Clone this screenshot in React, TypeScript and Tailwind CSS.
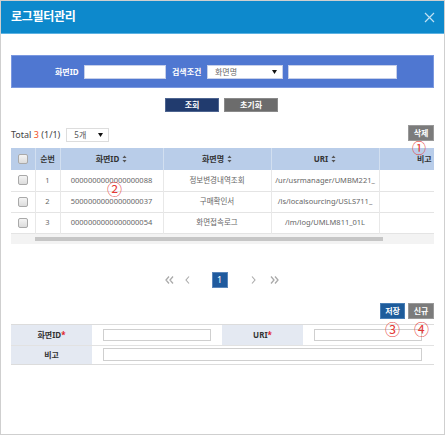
import React from "react";

const font = { fontFamily: "'Noto Sans', 'Noto Sans CJK KR', sans-serif" };

function SortIcon() {
  return (
    <svg width="5" height="8" viewBox="0 0 5 8" className="inline-block ml-[3px] -mt-[1px]">
      <path d="M2.5 0.5 L4.5 3 L0.5 3 Z" fill="#555" />
      <path d="M2.5 7.5 L4.5 5 L0.5 5 Z" fill="#555" />
    </svg>
  );
}

function Check() {
  return (
    <span className="inline-block w-[10px] h-[10px] rounded-[2px] border border-[#a9a9a9] bg-gradient-to-b from-[#f4f4f4] to-[#dcdcdc]" />
  );
}

function Caret() {
  return (
    <svg width="5" height="4" viewBox="0 0 5 4">
      <path d="M0 0 L5 0 L2.5 4 Z" fill="#111" />
    </svg>
  );
}

const rows = [
  { no: 1, id: "0000000000000000088", name: "정보변경내역조회", uri: "/ur/usrmanager/UMBM221_" },
  { no: 2, id: "5000000000000000037", name: "구매확인서", uri: "/ls/localsourcing/USLS711_" },
  { no: 3, id: "0000000000000000054", name: "화면접속로그", uri: "/lm/log/UMLM811_01L" },
];

export default function App() {
  return (
    <div style={font} className="relative w-[445px] h-[435px] border border-[#cfcfcf] bg-white overflow-hidden">
      {/* header */}
      <div className="h-[33px] bg-[#0d89cc] border-b border-[#5cb2e2] flex items-center justify-between pl-[10px] pr-[9px]">
        <span className="text-white text-[12px] font-bold tracking-tight">로그필터관리</span>
        <svg width="11" height="11" viewBox="0 0 11 11">
          <path d="M1 1 L10 10 M10 1 L1 10" stroke="#bfe0f3" strokeWidth="1.2" />
        </svg>
      </div>

      <div className="px-[10px] pt-[21px]">
        {/* search panel */}
        <div className="h-[33px] bg-[#4f77d1] border border-[#7a98e0] flex items-center pl-[43px] text-[8px] whitespace-nowrap">
          <span className="text-white font-bold w-[21px]">화면ID</span>
          <span className="ml-[8px] w-[82px] h-[14px] bg-white border border-[#c6cfe9]" />
          <span className="ml-[6px] w-[28px] text-white font-bold">검색조건</span>
          <span className="ml-[7px] w-[76px] h-[14px] bg-white border border-[#c6cfe9] flex items-center justify-between pl-[7px] pr-[5px] text-[#666]">
            화면명
            <Caret />
          </span>
          <span className="ml-[5px] w-[109px] h-[14px] bg-white border border-[#c6cfe9]" />
        </div>

        {/* buttons */}
        <div className="flex justify-center gap-[5px] mt-[10px] pr-[2px]">
          <span className="w-[54px] h-[14px] bg-[#213b6e] border border-[#4d6490] text-white text-[8px] font-bold flex items-center justify-center">조회</span>
          <span className="w-[54px] h-[14px] bg-[#6c6c6c] border border-[#8a8a8a] text-white text-[8px] font-bold flex items-center justify-center">초기화</span>
        </div>

        {/* total row */}
        <div className="flex items-end justify-between mt-[13px] h-[17px]">
          <div className="flex items-center text-[9px] text-[#444]">
            <span>
              Total <span className="text-[#f0501e]">3</span> (1/1)
            </span>
            <span className="ml-[6px] w-[43px] h-[14px] border border-[#ddd] bg-white flex items-center justify-between pl-[7px] pr-[5px] text-[8px] text-[#555]">
              5개
              <Caret />
            </span>
          </div>
          <span className="self-start w-[26px] h-[16px] bg-[#7b7b7b] border border-[#999] text-white text-[8px] font-bold flex items-center justify-center">삭제</span>
        </div>

        {/* table */}
        <div className="mt-[6px] w-[423px] overflow-hidden">
          <table className="table-fixed border-collapse w-[458px] text-[7.5px]">
            <colgroup>
              <col className="w-[24px]" />
              <col className="w-[25px]" />
              <col className="w-[103px]" />
              <col className="w-[108px]" />
              <col className="w-[108px]" />
              <col className="w-[90px]" />
            </colgroup>
            <thead>
              <tr className="h-[22px] bg-[#b9cde9] text-[#333] text-[8px]">
                <th className="border-r border-[#d2dff0]"><div className="flex justify-center"><Check /></div></th>
                <th className="border-r border-[#d2dff0] font-bold">순번</th>
                <th className="border-r border-[#d2dff0] font-bold">화면ID<SortIcon /></th>
                <th className="border-r border-[#d2dff0] font-bold">화면명<SortIcon /></th>
                <th className="border-r border-[#d2dff0] font-bold">URI<SortIcon /></th>
                <th className="font-bold">비고</th>
              </tr>
            </thead>
            <tbody>
              {rows.map((r) => (
                <tr key={r.no} className="h-[21px] border-b border-[#e4e4e4] text-[#666]">
                  <td className="border-r border-[#e8e8e8]"><div className="flex justify-center"><Check /></div></td>
                  <td className="border-r border-[#e8e8e8] text-center">{r.no}</td>
                  <td className="border-r border-[#e8e8e8] text-center">{r.id}</td>
                  <td className="border-r border-[#e8e8e8] text-center">{r.name}</td>
                  <td className="border-r border-[#e8e8e8] text-center">{r.uri}</td>
                  <td></td>
                </tr>
              ))}
            </tbody>
          </table>
          {/* horizontal scroll bar */}
          <div className="h-[10px] bg-[#f3f3f3] flex items-center">
            <span className="ml-[24px] w-[348px] h-[4px] bg-[#c6c6c6]" />
          </div>
        </div>

        {/* pagination */}
        <div className="flex items-center justify-center mt-[28px] h-[16px] pr-[2px]">
          <svg width="9" height="8" viewBox="0 0 9 8" className="mr-[11px]">
            <path d="M4 0.5 L1 4 L4 7.5 M8 0.5 L5 4 L8 7.5" stroke="#aaa" strokeWidth="1.3" fill="none" />
          </svg>
          <svg width="5" height="8" viewBox="0 0 5 8" className="mr-[22px]">
            <path d="M4 0.5 L1 4 L4 7.5" stroke="#aaa" strokeWidth="1.1" fill="none" />
          </svg>
          <span className="w-[16px] h-[16px] bg-[#1f5a9e] border border-[#5a86bb] text-white text-[9px] flex items-center justify-center">1</span>
          <svg width="5" height="8" viewBox="0 0 5 8" className="ml-[23px]">
            <path d="M1 0.5 L4 4 L1 7.5" stroke="#aaa" strokeWidth="1.1" fill="none" />
          </svg>
          <svg width="9" height="8" viewBox="0 0 9 8" className="ml-[14px]">
            <path d="M1 0.5 L4 4 L1 7.5 M5 0.5 L8 4 L5 7.5" stroke="#aaa" strokeWidth="1.3" fill="none" />
          </svg>
        </div>

        {/* save / new */}
        <div className="flex justify-end gap-[3px] mt-[15px]">
          <span className="w-[25px] h-[16px] bg-[#1e5c9b] border border-[#4a7fb6] text-white text-[8px] font-bold flex items-center justify-center">저장</span>
          <span className="w-[26px] h-[16px] bg-[#7b7b7b] border border-[#999] text-white text-[8px] font-bold flex items-center justify-center">신규</span>
        </div>

        {/* form */}
        <div className="mt-[5px] border-t border-[#dcdcdc] border-b text-[8px] text-[#333]">
          <div className="flex h-[21px] border-b border-[#e2e2e2]">
            <div className="w-[81px] bg-[#e4e9f2] flex items-center justify-center font-bold">
              화면ID<span className="text-[#e0202a]">*</span>
            </div>
            <div className="w-[130px] flex items-center pl-[11px]">
              <span className="w-[108px] h-[12px] border border-[#cfcfcf] bg-white" />
            </div>
            <div className="w-[81px] bg-[#e4e9f2] flex items-center justify-center font-bold">
              URI<span className="text-[#e0202a]">*</span>
            </div>
            <div className="flex-1 flex items-center pl-[11px]">
              <span className="w-[108px] h-[12px] border border-[#cfcfcf] bg-white" />
            </div>
          </div>
          <div className="flex h-[18px]">
            <div className="w-[81px] bg-[#e4e9f2] flex items-center justify-center font-bold">비고</div>
            <div className="flex-1 flex items-center pl-[11px]">
              <span className="w-[319px] h-[13px] border border-[#cfcfcf] bg-white" />
            </div>
          </div>
        </div>
      </div>

      {/* annotations */}
      <span className="absolute left-[411px] top-[140px] text-[14px] leading-none text-[#e53935]">①</span>
      <span className="absolute left-[106px] top-[181px] text-[15px] leading-none text-[#e53935]">②</span>
      <span className="absolute left-[384px] top-[321px] text-[15px] leading-none text-[#e53935]">③</span>
      <span className="absolute left-[413px] top-[321px] text-[15px] leading-none text-[#e53935]">④</span>
    </div>
  );
}
